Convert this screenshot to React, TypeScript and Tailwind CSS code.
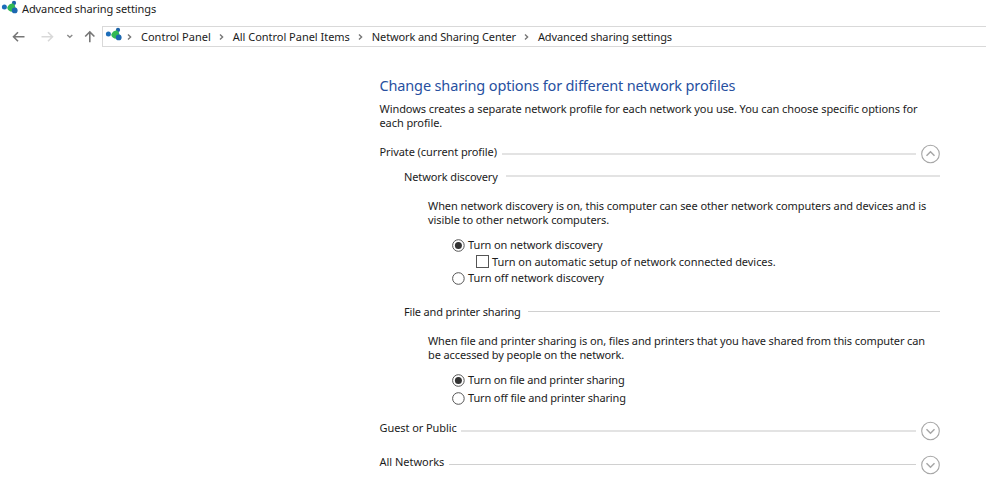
import React from 'react';

function NetworkIcon() {
  return (
    <svg width="18" height="15" viewBox="0 0 18 15" className="block shrink-0">
      <circle cx="4.4" cy="7.1" r="2.5" fill="#1c6dba" />
      <path d="M12 4.5L14 3L16 9.5L12 12Z" fill="#2c96a0" />
      <circle cx="14" cy="2.9" r="2.1" fill="#1d63a8" />
      <path d="M7.2 7.8C8 5.2 10.4 3.3 12.8 3.2C14.4 4.3 15.2 6.2 15.2 8.4C13.8 9.2 13 10.6 12.4 11.8C9.5 11.7 7.4 10.2 7.2 7.8Z" fill="#33b954" />
      <circle cx="14.7" cy="10.4" r="2.9" fill="#1c68b0" />
    </svg>
  );
}

function Crumb({ children, className }: { children: string; className: string }) {
  return (
    <div className={'flex h-[14px] items-center ' + className}>
      <svg width="5" height="8" viewBox="0 0 5 8" className="mr-[9px] block">
        <path d="M1 1.5L3.6 4L1 6.5" fill="none" stroke="#777" strokeWidth="1.4" />
      </svg>
      <span>{children}</span>
    </div>
  );
}

function Toggle({ open = false }: { open?: boolean }) {
  return (
    <svg width="20" height="20" viewBox="0 0 20 20" className="ml-[4px] block shrink-0" fill="none">
      <circle cx="10.5" cy="10" r="8.8" stroke="#a6a6a6" strokeWidth="1.1" />
      <path d={open ? 'M6.5 11.8L10.5 7.8L14.5 11.8' : 'M6.5 8.3L10.5 12.3L14.5 8.3'} stroke="#a6a6a6" strokeWidth="1.5" />
    </svg>
  );
}

function Radio({ checked = false }: { checked?: boolean }) {
  return (
    <svg width="13" height="14" viewBox="0 0 13 14" className="mr-[3px] block shrink-0">
      <circle cx="6.4" cy="7.5" r="5.8" fill="white" stroke="#555" strokeWidth="1" />
      {checked && <circle cx="6.4" cy="7.5" r="3.5" fill="#333" />}
    </svg>
  );
}

export default function App() {
  return (
    <div className="h-[500px] w-[986px] overflow-hidden bg-white font-['Noto_Sans',sans-serif] text-[11px] leading-[14px] whitespace-nowrap text-[#1c1c1c]">
      <header className="flex h-[26px]">
        <NetworkIcon />
        <span className="mt-[2px] ml-[4px] tracking-[-0.1px]">Advanced sharing settings</span>
      </header>
      <nav className="flex h-[21px]">
        <svg width="102" height="21" viewBox="0 0 102 21" fill="none" className="block shrink-0">
          <path d="M24.5 10.7H13.5M18 6.2L13.5 10.7L18 15.2" stroke="#777" strokeWidth="1.6" />
          <path d="M41.5 10.7H52.5M48 6.2L52.5 10.7L48 15.2" stroke="#d9d9d9" strokeWidth="1.6" />
          <path d="M67.3 9L69.8 11.3L72.3 9" stroke="#8a8a8a" strokeWidth="1.4" />
          <path d="M89.8 16.3V6M85.2 10.5L89.8 5.9L94.4 10.5" stroke="#777" strokeWidth="1.6" />
        </svg>
        <div className="flex h-[21px] grow border-y border-l border-[#d9d9d9] pl-[1px]">
          <NetworkIcon />
          <div className="flex pt-[3px]">
            <Crumb className="ml-[5px]">Control Panel</Crumb>
            <Crumb className="ml-[8px] tracking-[-0.02px]">All Control Panel Items</Crumb>
            <Crumb className="ml-[8px] tracking-[-0.12px]">Network and Sharing Center</Crumb>
            <Crumb className="ml-[8px] tracking-[-0.1px]">Advanced sharing settings</Crumb>
          </div>
        </div>
      </nav>
      <main className="ml-[379px] w-[561px] pt-[28px]">
        <h1 className="h-[27px] pl-[0.5px] text-[14.5px] leading-[20px] tracking-[-0.15px] text-[#27509f]">Change sharing options for different network profiles</h1>
        <p className="h-[42px] pl-[0.5px] tracking-[-0.08px]">
          Windows creates a separate network profile for each network you use. You can choose specific options for
          <br />
          each profile.
        </p>
        <div className="flex h-[20px]">
          <span className="mt-[1px] ml-[0.5px] tracking-[-0.09px]">Private (current profile)</span>
          <i className="mt-[9px] ml-[5.5px] h-[2px] grow bg-[#e3e3e3]" />
          <Toggle open />
        </div>
        <section className="pl-[25px]">
          <div className="mt-[6px] flex h-[29px]">
            <span className="tracking-[-0.11px]">Network discovery</span>
            <i className="mt-[5px] ml-[8px] h-[2px] grow bg-[#e3e3e3]" />
          </div>
          <div className="pl-[24px]">
            <p className="h-[39px] tracking-[-0.085px]">
              When network discovery is on, this computer can see other network computers and devices and is
              <br />
              visible to other network computers.
            </p>
            <div className="ml-[24px] flex h-[17px] tracking-[-0.1px]"><Radio checked /><span>Turn on network discovery</span></div>
            <div className="ml-[48px] flex h-[16px]">
              <i className="mr-[3px] h-[13px] w-[13px] border border-[#555]" />
              <span className="tracking-[-0.05px]">Turn on automatic setup of network connected devices.</span>
            </div>
            <div className="ml-[24px] flex h-[34px] tracking-[-0.07px]"><Radio /><span>Turn off network discovery</span></div>
          </div>
          <div className="flex h-[29px]">
            <span className="tracking-[-0.17px]">File and printer sharing</span>
            <i className="mt-[6px] ml-[7px] h-px grow bg-[#d0d0d0]" />
          </div>
          <div className="pl-[24px]">
            <p className="h-[39px] tracking-[-0.11px]">
              When file and printer sharing is on, files and printers that you have shared from this computer can
              <br />
              be accessed by people on the network.
            </p>
            <div className="ml-[24px] flex h-[18px] tracking-[-0.16px]"><Radio checked /><span>Turn on file and printer sharing</span></div>
            <div className="ml-[24px] flex h-[30px] tracking-[-0.14px]"><Radio /><span>Turn off file and printer sharing</span></div>
          </div>
        </section>
        <div className="flex h-[34px]">
          <span className="ml-[0.5px] tracking-[-0.08px]">Guest or Public</span>
          <i className="mt-[9px] ml-[4.5px] h-[2px] grow bg-[#e3e3e3]" />
          <Toggle />
        </div>
        <div className="flex h-[34px]">
          <span className="ml-[0.5px] tracking-[-0.02px]">All Networks</span>
          <i className="mt-[9px] ml-[4.5px] h-px grow bg-[#d0d0d0]" />
          <Toggle />
        </div>
      </main>
    </div>
  );
}
